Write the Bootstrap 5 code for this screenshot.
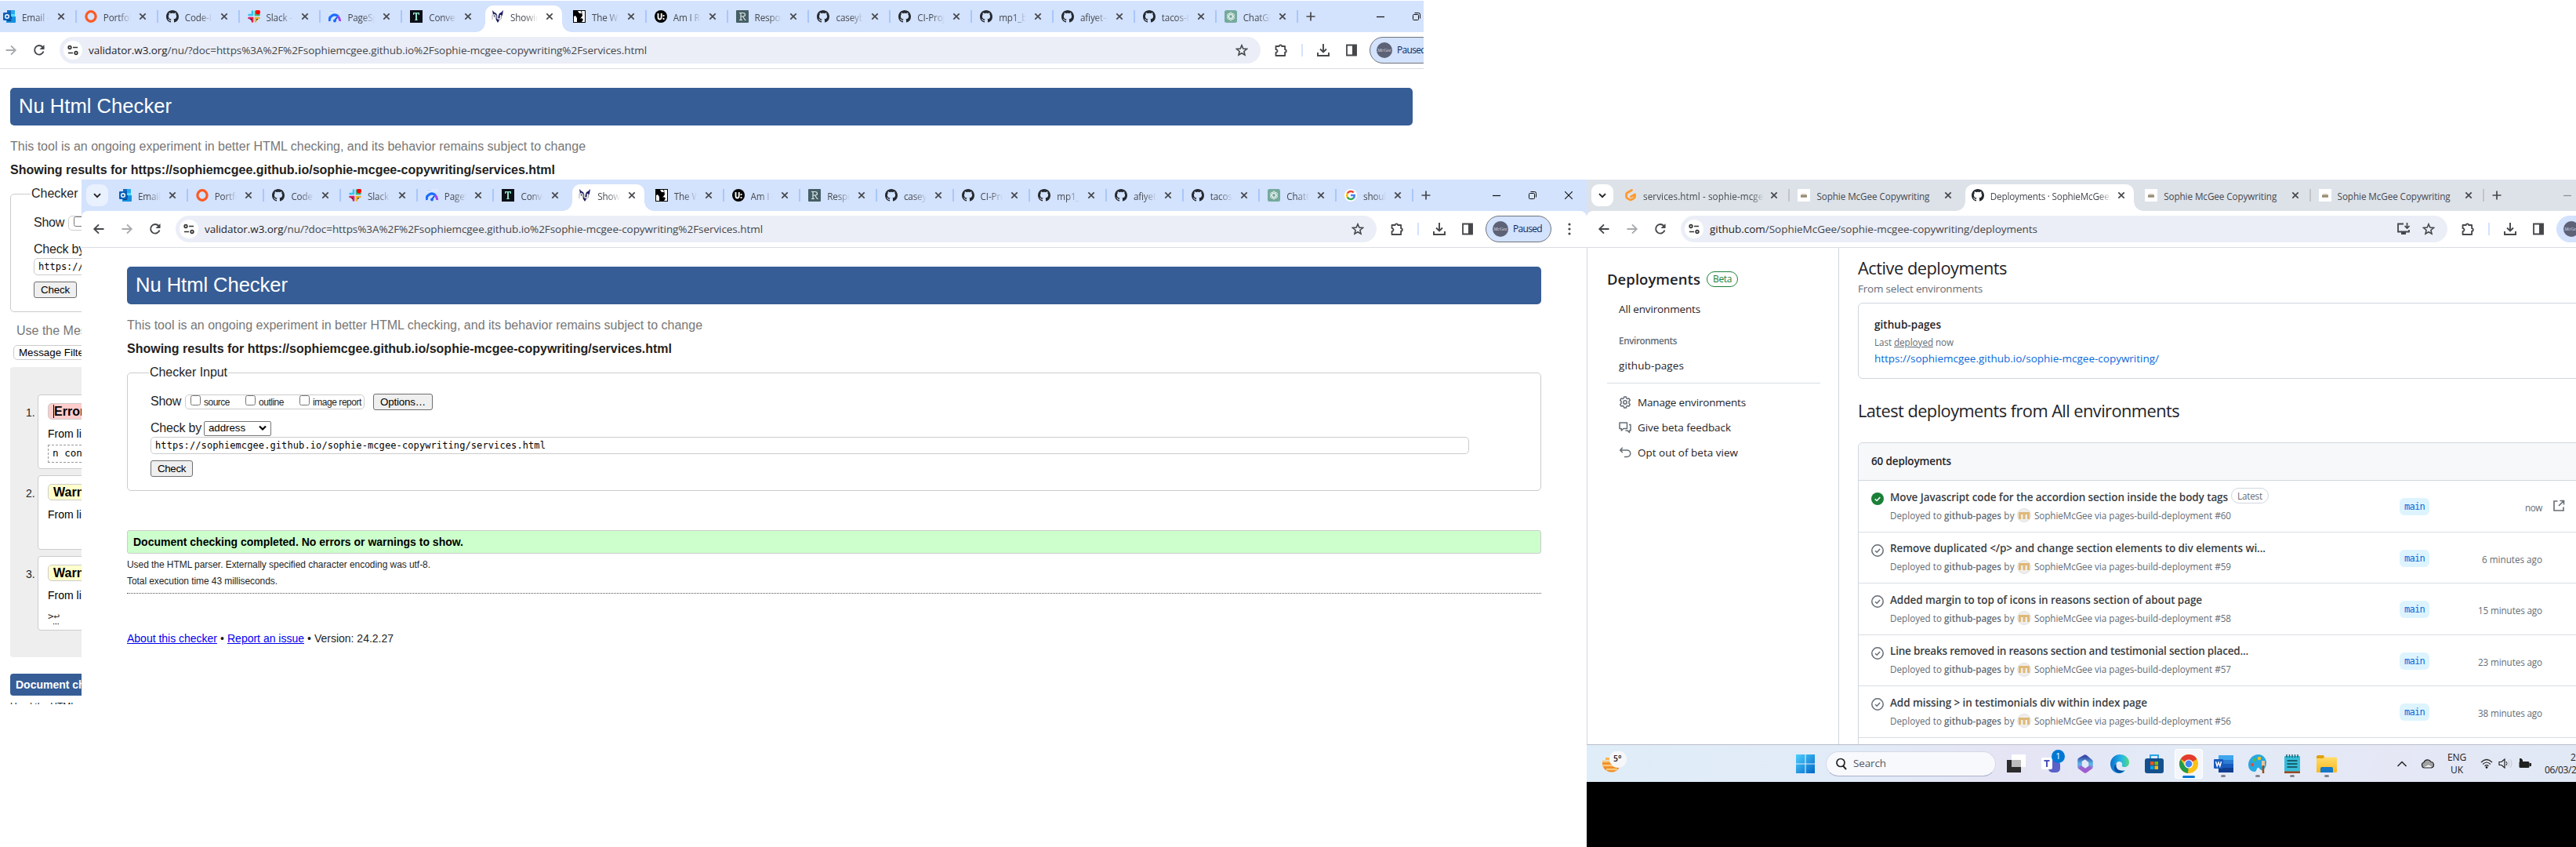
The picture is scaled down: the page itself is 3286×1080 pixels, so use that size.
<!DOCTYPE html>
<html lang="en">
<head>
<meta charset="utf-8">
<title>Nu Html Checker and GitHub Deployments</title>
<link rel="stylesheet" href="https://cdn.jsdelivr.net/npm/bootstrap@5.3.0/dist/css/bootstrap.min.css">
<style>
html,body{margin:0;background:#fff}
body{width:3286px;height:1080px;overflow:hidden;position:relative;font-family:"Open Sans","Noto Sans",sans-serif;font-size:13.5px;line-height:1.2;color:#1f2328}
svg{display:block;flex:none}
.ico{width:16px;height:16px}
.desk-window{position:absolute;overflow:hidden;background:#fff}
.win-a{left:0;top:0;width:1816px;height:898px}
.win-a .browser{margin-left:-44px;margin-top:1px;width:1920px}
.win-b{left:104px;top:229px;width:1920px;height:851px}
.win-c{left:2024px;top:229px;width:1262px;height:851px}
.win-c .browser{width:1366px}
/* browser chrome */
.strip{height:40px;background:#d3e2fd}
.win-c .strip{background:#dde2e9}
.drop{width:28px;height:28px;border-radius:9px;background:#e9f0fe;margin:0 6px}
.win-c .drop{background:#fff}
.win-a .btab{width:103.85px}.win-b .btab{width:97.7px}.win-c .btab{width:221.4px}
.btab{height:40px;flex:none;position:relative;padding:0 17px 0 8px;z-index:0}
.tabname{flex:1 1 0;overflow:hidden;white-space:nowrap;margin:1px 10px 0 8px;font-size:11.7px;line-height:18px;color:#45494f;-webkit-mask-image:linear-gradient(90deg,#000 calc(100% - 16px),transparent)}
.win-c .tabname{margin-right:8px;margin-left:8px}
.win-c .tabname.whole{-webkit-mask-image:none}
.btab.line::after{content:"";position:absolute;right:2px;top:12px;width:2px;height:16px;background:#a8c7fa}
.win-c .btab.line::after{background:#c3c4c6}
.btab.on::before{content:"";position:absolute;z-index:-1;left:0;right:6px;top:6px;bottom:0;background:#fff;border-radius:10px 10px 0 0}
.flare{position:absolute;z-index:-1;bottom:0;width:12px;height:12px}
.flare.l{left:-12px;background:radial-gradient(circle at 0 0,transparent 11.5px,#fff 12px)}
.flare.r{right:-6px;background:radial-gradient(circle at 100% 0,transparent 11.5px,#fff 12px)}
.plusbox{width:28px}
.wc{width:46px}
.toolwrap{background:#d3e2fd}
.win-c .toolwrap{background:#dde2e9}
.toolbar{height:47px;border-bottom:1px solid #dadce0;padding:0 4px;background:#fff;border-radius:8px 8px 0 0}
.tb{width:36px;flex:none}
.urlbar{height:34px;border-radius:17px;background:#ebeef7;margin:0 8px;padding:0 14px 0 5px;flex:1 1 0;font-size:13.5px;color:#45474a;white-space:nowrap}
.urlbar b{font-weight:400;color:#1f1f1f}
.site{width:24px;height:24px;border-radius:50%;background:#fff;margin-right:8px}
.tbsep{width:2px;height:16px;background:#d3e2fd;margin:0 8px}
.profile{width:84px;height:34px;border-radius:17px;border:1px solid #6f747c;background:#d3e2fd;margin:0 5px;padding-left:8px;font-size:12px;color:#0a2a62;flex:none}
.win-c .profile{border-color:#d3e2fd}
.avatar{width:20px;height:20px;border-radius:50%;background:#5d6277;color:#d9dbe2;font:italic 6px "Liberation Serif",serif;margin-right:6px}
/* validator page */
.nu{font-family:"Liberation Sans",Arial,sans-serif;font-size:16px;color:#1f1f1f;padding:24px 58px 0}
.win-a .nu{padding:24px 74px 0 57px}
.nu div,.nu span{white-space:nowrap}
.banner{height:48px;border-radius:5px;background:#365d95;color:#fff;font-size:25.6px;line-height:46px;padding-left:11px}
.intro{margin-top:17px;color:#777}
.h20{height:20px;line-height:20px}
.fset{border:1px solid #ccc;border-radius:5px;height:151px;padding:0 29px;margin-top:20px}
.leg{margin:-11px 0 0 -4px}
.leg span{background:#fff;padding:0 1px}
.win-b .leg{margin-left:-2px}
.boxes{border:1px solid #ccc;border-radius:5px;height:19px;margin-left:5px;font-size:12px;width:229px;padding-left:6px}
.chk{width:13px;height:13px;border:1px solid #767676;border-radius:2.5px;background:#fff;flex:none;margin-right:4px;margin-top:-3px}
.boxes span{position:relative;top:1px}
.btnn{border:1px solid #6f6f6f;border-radius:3px;background:#efefef;color:#000;font-size:13.33px;height:21px;line-height:19px}
.sel{border:1px solid #767676;border-radius:2px;height:19px;width:86px;font-size:13.33px;padding:0 5px;margin-left:3px;color:#000}
.addr{border:1px solid #ccc;border-radius:5px;height:22px;width:1682px;margin-top:1px;padding-left:5px;font:12px/21px "DejaVu Sans Mono",monospace;color:#000}
.okbar{margin-top:50px;height:30px;border:1px solid #ccc;border-radius:3px;background:#cfc;font-weight:700;font-size:14px;line-height:28px;padding-left:7px;color:#000}
.small12{font-size:12px;height:18px;line-height:18px}
.nu a{color:#00e;text-decoration:underline}
.dots{border-top:1px dotted #555;margin-top:6px}
.greylist{background:#eee;border-radius:4px;height:370px;margin-top:9px;padding:35px 35px 0 20px}
.msg{height:95px;margin-bottom:8px}
.msg .num{width:15px;font-size:14px;padding-top:15px;line-height:16px}
.msgbox{border:1px solid #ccc;border-radius:4px;background:#fff;padding:10px 12px;font-size:14px;color:#000}
.lvl{height:21px;border:1px solid #ccc;border-radius:5px;font-weight:700;font-size:16px;line-height:19px;padding:0 6px;width:90px}
.lvl.err{background:#fcc}.lvl.warn{background:#ffc}
.lvl.err span{border-left:1px solid #000}
.mono{font-family:"DejaVu Sans Mono",monospace;font-size:12.6px}
#ra,#rb{margin-top:10px}
.showrow{height:22px;margin-top:16px}
.byrow{height:20px;margin-top:13px}
.gapl{margin-left:20px}
.opt{margin-left:11px;padding:0 8px;width:76px}
#usem{margin-top:14px;color:#777}
#mf .boxes{font-size:13.33px;line-height:17px;width:130px;height:19px}
.from{margin-top:10px;line-height:16px}
.codeb{border:1px dashed #999;margin-top:6px;height:23px;line-height:20px;padding-left:5px}
.nl{margin-top:10px;line-height:17px;color:#333}
.nl u{text-decoration-style:dotted;text-underline-offset:5px}
.bluebar{margin-top:21px;height:28px;border-radius:4px;background:#365d95;color:#fff;font-size:14px;line-height:28px;padding-left:7px}
#u0{margin-top:5px;color:#222}
#u1{margin-top:5px}#u2{margin-top:3px}
#foot{margin-top:47px;font-size:14px}
/* GitHub page */
.gh{height:633px}
.side{width:322px;border-right:1px solid #d0d7de;border-left:1px solid #d0d7de;padding:28px 23px 0 25px;flex:none;white-space:nowrap}
.beta{border:1px solid #1a7f37;border-radius:10px;height:20px;width:40px;color:#1a7f37;font-size:12px;font-weight:500;margin-left:8px}
.side .it{height:32px;padding-left:15px}
.gray{color:#656d76}
.semi{font-weight:600}
.main{flex:1 1 0;padding:12px 0 0 24px;white-space:nowrap;overflow:hidden}
.bigt{font-size:21.8px;line-height:28px;height:28px}
.envbox{border:1px solid #d0d7de;border-radius:6px;height:97px;margin-top:8px;padding:17px 20px}
.dlist{border:1px solid #d0d7de;border-radius:6px 6px 0 0;height:400px;margin-top:26px}
.dhead{height:48px;background:#f6f8fa;border-bottom:1px solid #d0d7de;padding-left:16px;border-radius:6px 0 0 0}
.drow{height:65.5px;border-bottom:1px solid #d8dee4;padding-left:16px}
.dinfo{width:658px;padding-left:8px}
.l1{height:20px;margin-top:11px;font-weight:600;color:#3a3e43}
.l2{height:18px;margin-top:4px;font-size:11.7px;color:#656d76}
.latest{border:1px solid #d0d7de;border-radius:10px;height:20px;width:48px;margin:-4px 0 0 4px;font-size:11.7px;font-weight:500;color:#656d76}
.face{width:18px;height:18px;border-radius:50%;background:#f0eeeb;border:1px solid #e2e2e4}
.branch{width:38px;height:22px;border-radius:6px;background:#ddf4ff;color:#0969da;font:12px "DejaVu Sans Mono",monospace;margin-top:22px}
.ago{width:144px;text-align:right;margin-top:25px;font-size:11.7px;line-height:18px;color:#656d76}
#dt{font-size:18.5px}
#alle{margin-top:10px}
#envh{margin-top:8px;font-size:11.7px}
.hrline{border-top:1px solid #d8dee4;margin:6px 0 8px}
.envsub{font-size:11.7px;height:20px;line-height:20px;margin-top:2px}
.envbox .h20:last-child{margin-top:1px}
#ld{margin-top:27px}
/* taskbar */
.taskbar{height:48px;border-top:1px solid #b9bcc9;background:linear-gradient(90deg,#dfedf8 0,#e2ebf8 25%,#e5e4f4 40%,#e3ebf7 55%,#e5e7f5 75%,#dfeaf6 100%);width:1366px}
.ti{width:44px;height:47px;flex:none;position:relative}
.ti.run::after{content:"";position:absolute;left:19px;bottom:6px;width:6px;height:3px;border-radius:2px;background:#85868e}
.ti.cur{background:#f5f6fc;box-shadow:inset 0 0 0 1px #fff;border-radius:4px;width:36px;height:38px;margin:0 4px}
.ti.cur::after{left:10px;bottom:1px;width:16px;background:#0078d4}
.tsearch{width:217px;height:32px;border-radius:16px;background:#f8f9fd;border:1px solid #d6d9e8;border-bottom-color:#a9b3cc;padding-left:10px;margin:0 4px;color:#55575c}
.weather{width:257px;padding-left:20px}
.note1{position:absolute;left:23px;top:6px;width:17px;height:17px;border-radius:50%;background:#0078d4;color:#fff;font-size:11px;line-height:16px;text-align:center}
.tray{font-size:12px;line-height:16px;color:#222;text-align:center}
#tray{margin-left:67px}
#cl{margin-left:17px}#lang{width:28px;margin-left:14px}#wf{margin-left:16px}#vo{margin-left:7px}#ba{margin-left:7px}#clk{width:60px;margin-left:17px}
.blackfill{background:#000;height:84px}
span[data-w],a[data-w],u[data-w]{display:inline-block;white-space:pre!important}
</style>
</head>
<body>
<svg width="0" height="0" class="position-absolute">
<defs>
<symbol id="outlook" viewBox="0 0 16 16"><path fill="#28a8ea" d="M5 0h10v9H5z"/><path fill="#0f6cbd" d="M5 0h5v5H5z"/><path fill="#50d9ff" d="M10 5h5v4h-5z"/><path fill="#1490df" d="M4 9l12-1v7a1 1 0 0 1-1 1H4z"/><path fill="#0a3f7a" d="M5 8h6l-1 6H5z"/><rect y="3" width="10" height="10" rx="1" fill="#0a5fb8"/><circle cx="5" cy="8" r="2.3" fill="none" stroke="#fff" stroke-width="1.4"/></symbol>
<symbol id="ring" viewBox="0 0 16 16"><ellipse cx="8" cy="8" rx="6.1" ry="6.3" fill="none" stroke="#fb5a22" stroke-width="3.2"/></symbol>
<symbol id="gh" viewBox="0 0 16 16"><path fill="#24292f" d="M8 0c4.42 0 8 3.58 8 8a8.013 8.013 0 0 1-5.45 7.59c-.4.08-.55-.17-.55-.38 0-.27.01-1.13.01-2.2 0-.75-.25-1.23-.54-1.48 1.78-.2 3.65-.88 3.65-3.95 0-.88-.31-1.59-.82-2.15.08-.2.36-1.02-.08-2.12 0 0-.67-.22-2.2.82-.64-.18-1.32-.27-2-.27-.68 0-1.36.09-2 .27-1.53-1.03-2.2-.82-2.2-.82-.44 1.1-.16 1.92-.08 2.12-.51.56-.82 1.28-.82 2.15 0 3.06 1.86 3.75 3.64 3.95-.23.2-.44.55-.51 1.07-.46.21-1.61.55-2.33-.66-.15-.24-.6-.83-1.23-.82-.67.01-.27.38.01.53.34.19.73.9.82 1.13.16.45.68 1.31 2.69.94 0 .67.01 1.3.01 1.49 0 .21-.15.45-.55.38A7.995 7.995 0 0 1 0 8c0-4.42 3.58-8 8-8Z"/></symbol>
<symbol id="slack" viewBox="0 0 16 16"><g stroke-width="2.600" stroke-linecap="round"><path stroke="#36c5f0" d="M6 1.500V6M1.500 6H6"/><path stroke="#2eb67d" d="M10 1.500V6h4.500"/><path stroke="#ecb22e" d="M10 14.500V10h4.500"/><path stroke="#e01e5a" d="M1.500 10H6v4.500"/></g><circle cx="13" cy="2.500" r="3" fill="#f00"/></symbol>
<symbol id="gauge" viewBox="0 0 16 16"><path fill="#dbe8fd" d="M0 0h16v4H0z"/><path fill="#b6d2fc" d="M1 1h6v1H1z"/><path d="M1.500 14a6.500 6.500 0 0 1 11-6" fill="none" stroke="#1a6dff" stroke-width="3"/><path d="M12 8a7 7 0 0 1 2.500 6" fill="none" stroke="#a142f4" stroke-width="3"/><path d="M8 13l3-4" stroke="#0b57d0" stroke-width="2"/><circle cx="8" cy="13.500" r="2" fill="#1a6dff"/></symbol>
<symbol id="tee" viewBox="0 0 16 16"><path fill="#0b0f17" d="M0 0h16v16H0z"/><path fill="#8ee0c8" d="M4 3h8v3h-1.200L10.500 4.300H9v7.700l1 .4v.6H6v-.6l1-.4V4.300H5.500L5.200 6H4z"/></symbol>
<symbol id="nu" viewBox="0 0 16 16"><path fill="#1d1a63" d="M1 0l3 3 2 1 2 5 2-5 2-1 3-3-1 6-3 5-3 5-3-5-3-5z"/><path d="M1.500 12V7q2-3 3.500 0v5M7.500 7v3q2 3 4 0V6v6" fill="none" stroke="#fff" stroke-width="1.700"/><path d="M1 12V6q2.500-2 4.500 1v5M7 6v5q3 2 5.500 0V6" fill="none" stroke="#888" stroke-width=".7"/></symbol>
<symbol id="wshape" viewBox="0 0 16 16"><path d="M0 0h16v16H0z"/><path fill="#fff" d="M1 8l2-1 2 3v5H1zM6 1h4l1 3H8zM11 1h4v14h-4l2-3-2-2-2 1 3-4z"/></symbol>
<symbol id="ux" viewBox="0 0 16 16"><circle cx="8" cy="8" r="8"/><path d="M4.500 4v5q0 2.500 2 2.500T8.700 9V4M11.500 6v2M11.500 10v2" fill="none" stroke="#fff" stroke-width="1.900"/></symbol>
<symbol id="arr" viewBox="0 0 16 16"><rect width="16" height="16" rx="1" fill="#455f66"/><path d="M4 3.500h4.500q3 .2 3 2.300T8.500 8H6M6 3.500v9M4 12.500h4M8.500 8l3 4.500h1" fill="none" stroke="#dfe6e6" stroke-width="1.200"/></symbol>
<symbol id="gpt" viewBox="0 0 16 16"><rect width="16" height="16" rx="2.500" fill="#74aa9c"/><g fill="none" stroke="#fff" stroke-width=".8"><ellipse cx="8" cy="8" rx="2.300" ry="5"/><ellipse cx="8" cy="8" rx="2.300" ry="5" transform="rotate(60 8 8)"/><ellipse cx="8" cy="8" rx="2.300" ry="5" transform="rotate(120 8 8)"/></g></symbol>
<symbol id="goog" viewBox="0 0 16 16"><circle cx="8" cy="8" r="8" fill="#fff"/><g fill="none" stroke-width="2.500"><path stroke="#ea4335" d="M3.800 5.500a5 5 0 0 1 8-1"/><path stroke="#fbbc05" d="M3.800 5.500a5 5 0 0 0 0 5"/><path stroke="#34a853" d="M3.800 10.500a5 5 0 0 0 7.500 1.300"/><path stroke="#4285f4" d="M8 8h4.800a5 5 0 0 1-1.500 3.800"/></g></symbol>
<symbol id="gitpod" viewBox="0 0 16 16"><path d="M9.500 1.500L3.500 5q-1 .6-1 1.800v3q0 1.200 1 1.800l3.500 2q1 .6 2 0l3.500-2q1-.6 1-1.800V7L8.500 9.800" fill="none" stroke="#ff9a2e" stroke-width="2.800" stroke-linecap="round" stroke-linejoin="round"/></symbol>
<symbol id="smg" viewBox="0 0 16 16"><path fill="#fff" d="M0 0h16v16H0z"/><path fill="#e9c9bd" d="M5 6h6v1.500H5z"/><path fill="#8c9079" d="M4 7.500h8V10H4z"/><path fill="#c7a58f" d="M4 10h8v1H4z"/></symbol>
<symbol id="x" viewBox="0 0 10 10"><path d="M1.300 1.300l7.400 7.400M8.700 1.300L1.300 8.700" stroke="#45474a" stroke-width="1.700"/></symbol>
<symbol id="back" viewBox="0 0 16 16"><path d="M14.500 8H2.500M8 2.300L2.300 8 8 13.700" fill="none" stroke="currentColor" stroke-width="1.900"/></symbol>
<symbol id="reload" viewBox="0 0 16 16"><path d="M13.500 9.500A5.800 5.800 0 1 1 12.300 4L14 5.500" fill="none" stroke="#45474a" stroke-width="1.900"/><path fill="#45474a" d="M14.500 1v6h-6z"/></symbol>
<symbol id="tune" viewBox="0 0 16 16"><g fill="none" stroke="#333" stroke-width="1.700"><circle cx="4" cy="4.500" r="1.800"/><path d="M8 4.500h6M2 11.500h6"/><circle cx="12" cy="11.500" r="1.800"/></g></symbol>
<symbol id="star" viewBox="0 0 16 16"><path d="M8 1.800l1.800 4.300 4.600.4-3.500 3 1.100 4.600L8 11.700l-4 2.400 1.100-4.600-3.500-3 4.600-.4z" fill="none" stroke="#45474a" stroke-width="1.600"/></symbol>
<symbol id="puzzle" viewBox="0 0 16 16"><path d="M1.500 3h4.200a1.700 1.700 0 0 1 3.400 0h4v4.200a1.700 1.700 0 0 1 0 3.400V15H1.500v-4a2 2 0 0 0 0-4z" fill="none" stroke="#45474a" stroke-width="1.800" stroke-linejoin="round"/></symbol>
<symbol id="down" viewBox="0 0 16 16"><path d="M8 0v10M4 6.500L8 10.500 12 6.500M1 11v4h14v-4" fill="none" stroke="#45474a" stroke-width="1.900"/></symbol>
<symbol id="panel" viewBox="0 0 16 16"><path d="M2 1.500h12v13H2z" fill="none" stroke="#45474a" stroke-width="1.800"/><path fill="#45474a" d="M9 1h5.500v14H9z"/></symbol>
<symbol id="inst" viewBox="0 0 16 16"><path d="M8 1.500H1v10h14V9" fill="none" stroke="#45474a" stroke-width="1.800"/><path fill="#45474a" d="M5 12h6v3H5z"/><path d="M12.500 0v6M9.500 4l3 3 3-3" fill="none" stroke="#45474a" stroke-width="1.700"/></symbol>
<symbol id="check" viewBox="0 0 16 16"><circle cx="8" cy="8" r="7.200" fill="none" stroke="#656d76" stroke-width="1.500"/><path d="M5 8.300l2.200 2 3.900-4.300" fill="none" stroke="#656d76" stroke-width="1.500"/></symbol>
<symbol id="checkok" viewBox="0 0 16 16"><circle cx="8" cy="8" r="8" fill="#1a7f37"/><path d="M4.700 8.300l2.400 2.200 4.200-4.600" fill="none" stroke="#fff" stroke-width="1.500"/></symbol>
<symbol id="gear" viewBox="0 0 16 16"><path d="M6.700 1h2.600l.5 1.900 1.300.7 1.900-.5 1.300 2.200-1.300 1.500v2.400l1.300 1.500-1.300 2.200-1.900-.5-1.300.7-.5 1.900H6.700l-.5-1.900-1.300-.7-1.900.5-1.300-2.200L3 9.200V6.800L1.700 5.300 3 3.100l1.900.5 1.300-.7z" fill="none" stroke="#656d76" stroke-width="1.500" stroke-linejoin="round"/><circle cx="8" cy="8" r="2.200" fill="none" stroke="#656d76" stroke-width="1.500"/></symbol>
<symbol id="talk" viewBox="0 0 16 16"><path d="M1 2h9.500v7.500H6L3.300 12V9.500H1zM13 4.500h2v7.500h-1.500v2.500L11 12H8.500" fill="none" stroke="#656d76" stroke-width="1.500" stroke-linejoin="round"/></symbol>
<symbol id="undo" viewBox="0 0 16 16"><path d="M4.800 1.800L1.800 5l3 3.200M2 5h8.500a4 4 0 0 1 0 8.500H7" fill="none" stroke="#656d76" stroke-width="1.500"/></symbol>
<symbol id="ext" viewBox="0 0 16 16"><path d="M6.500 2H2v12h12V9.500M9.500 1.500h5v5M14 2L8 8" fill="none" stroke="#656d76" stroke-width="1.600"/></symbol>
<linearGradient id="blu" x2="1" y2="1"><stop stop-color="#4fd0ff"/><stop offset="1" stop-color="#0067c8"/></linearGradient>
<linearGradient id="cop" x2="0" y2="1"><stop stop-color="#3b4aa8"/><stop offset=".5" stop-color="#58b7ea"/><stop offset="1" stop-color="#b455c8"/></linearGradient>
<linearGradient id="edg" x2="1" y2="0"><stop stop-color="#0c6fd0"/><stop offset=".6" stop-color="#25b9e6"/><stop offset="1" stop-color="#57d878"/></linearGradient>
<linearGradient id="fol" x2="0" y2="1"><stop stop-color="#ffdc6b"/><stop offset="1" stop-color="#fbb81a"/></linearGradient>
</defs></svg>

<!-- rear validator window -->
<section class="desk-window win-a">
 <div class="browser">
  <div data-chrome="a"></div>
  <div class="nu">
   <div class="banner"><span data-w="195">Nu Html Checker</span></div>
   <div class="h20 intro"><span data-w="734">This tool is an ongoing experiment in better HTML checking, and its behavior remains subject to change</span></div>
   <div class="h20 fw-bold" id="ra"><span data-w="695">Showing results for https://sophiemcgee.github.io/sophie-mcgee-copywriting/services.html</span></div>
   <div class="fset">
    <div class="h20 leg"><span>Checker Input</span></div>
    <div class="d-flex align-items-center showrow"><span data-w="39">Show</span><div class="boxes d-flex align-items-center"><i class="chk"></i></div></div>
    <div class="d-flex align-items-center byrow"><span data-w="65">Check by</span></div>
    <div class="addr">https://so</div>
    <div class="btnn d-inline-block mt-2 px-2"><span data-w="37">Check</span></div>
   </div>
   <div class="h20 ps-2" id="usem">Use the Message</div>
   <div class="d-flex align-items-center ps-1 mt-2" id="mf"><div class="boxes ms-0 text-black">Message Filtering</div></div>
   <div class="greylist">
    <div class="msg d-flex"><div class="num">1.</div><div class="msgbox flex-fill"><div class="lvl err"><span>Error</span></div><div class="from">From line</div><div class="codeb mono">n content</div></div></div>
    <div class="msg d-flex"><div class="num">2.</div><div class="msgbox flex-fill"><div class="lvl warn">Warning</div><div class="from">From line</div></div></div>
    <div class="msg d-flex"><div class="num">3.</div><div class="msgbox flex-fill"><div class="lvl warn">Warning</div><div class="from">From line</div><div class="nl mono">&gt;<u>↩</u></div></div></div>
   </div>
   <div class="bluebar fw-bold">Document checking</div>
   <div class="small12" id="u0">Used the HTML parser.</div>
  </div>
 </div>
</section>

<!-- front validator window -->
<section class="desk-window win-b">
 <div class="browser">
  <div data-chrome="b"></div>
  <div class="nu">
   <div class="banner"><span data-w="194">Nu Html Checker</span></div>
   <div class="h20 intro"><span data-w="734">This tool is an ongoing experiment in better HTML checking, and its behavior remains subject to change</span></div>
   <div class="h20 fw-bold" id="rb"><span data-w="695">Showing results for https://sophiemcgee.github.io/sophie-mcgee-copywriting/services.html</span></div>
   <div class="fset">
    <div class="h20 leg"><span data-w="101">Checker Input</span></div>
    <div class="d-flex align-items-center showrow"><span data-w="39">Show</span>
     <div class="boxes d-flex align-items-center"><i class="chk"></i><span data-w="33">source</span><i class="chk gapl"></i><span data-w="32">outline</span><i class="chk gapl"></i><span data-w="62">image report</span></div>
     <div class="btnn opt"><span data-w="58">Options…</span></div></div>
    <div class="d-flex align-items-center byrow"><span data-w="65">Check by</span><div class="sel d-flex align-items-center justify-content-between"><span data-w="47">address</span><svg width="10" height="8" viewBox="0 0 10 8"><path d="M1 1.500l4 4 4-4" fill="none" stroke="#000" stroke-width="2.200"/></svg></div></div>
    <div class="addr"><span data-w="498">https://sophiemcgee.github.io/sophie-mcgee-copywriting/services.html</span></div>
    <div class="btnn d-inline-block mt-2 px-2"><span data-w="36">Check</span></div>
   </div>
   <div class="okbar"><span data-w="421">Document checking completed. No errors or warnings to show.</span></div>
   <div class="small12" id="u1"><span data-w="387">Used the HTML parser. Externally specified character encoding was utf-8.</span></div>
   <div class="small12" id="u2"><span data-w="192">Total execution time 43 milliseconds.</span></div>
   <div class="dots"></div>
   <div class="h20" id="foot"><a href="#" data-w="115">About this checker</a><span data-w="13"> • </span><a href="#" data-w="98">Report an issue</a><span data-w="13"> • </span><span data-w="101">Version: 24.2.27</span></div>
  </div>
 </div>
</section>

<!-- GitHub window with taskbar -->
<section class="desk-window win-c">
 <div class="browser">
  <div data-chrome="c"></div>
  <div class="gh d-flex">
   <aside class="side">
    <div class="d-flex align-items-center mb-2" style="height:24px"><span class="semi" id="dt" data-w="119">Deployments</span><span class="beta d-flex align-items-center justify-content-center"><span data-w="24">Beta</span></span></div>
    <div class="it d-flex align-items-center" id="alle"><span data-w="104">All environments</span></div>
    <div class="it d-flex align-items-center gray semi" id="envh"><span data-w="74">Environments</span></div>
    <div class="it d-flex align-items-center"><span data-w="83">github-pages</span></div>
    <div class="hrline"></div>
    <div class="it d-flex align-items-center gap-2"><svg class="ico"><use href="#gear"/></svg><span data-w="138">Manage environments</span></div>
    <div class="it d-flex align-items-center gap-2"><svg class="ico"><use href="#talk"/></svg><span data-w="119">Give beta feedback</span></div>
    <div class="it d-flex align-items-center gap-2"><svg class="ico"><use href="#undo"/></svg><span data-w="128">Opt out of beta view</span></div>
   </aside>
   <main class="main">
    <div class="bigt"><span data-w="190">Active deployments</span></div>
    <div class="gray h20" style="margin-top:2px"><span data-w="159">From select environments</span></div>
    <div class="envbox">
     <div class="h20 semi"><span data-w="85">github-pages</span></div>
     <div class="gray envsub"><span data-w="25">Last </span><u data-w="50">deployed</u><span data-w="26"> now</span></div>
     <div class="h20" style="color:#0969da"><span data-w="363">https://sophiemcgee.github.io/sophie-mcgee-copywriting/</span></div>
    </div>
    <div class="bigt" id="ld"><span data-w="410">Latest deployments from All environments</span></div>
    <div class="dlist"><div class="dhead d-flex align-items-center semi"><span data-w="102">60 deployments</span></div><div id="rows"></div></div>
   </main>
  </div>
  <footer class="taskbar d-flex align-items-center">
   <div class="weather"><svg width="32" height="32" viewBox="0 0 32 32"><path fill="#f08a24" d="M0 14h23a11.500 11.500 0 0 1-23 2z"/><path fill="#f9b64c" d="M4 8h8v3H4z"/><path stroke="#f8c877" stroke-width="2.500" d="M0 13h18M0 18h22M5 23h14"/><circle cx="20" cy="10" r="11" fill="#f7f7f9"/><text x="14" y="13" font-size="10.500" font-weight="600" fill="#222">5°</text></svg></div>
   <div class="ti d-flex align-items-center justify-content-center"><svg width="24" height="24" viewBox="0 0 24 24"><path fill="url(#blu)" d="M0 0h11.400v11.400H0zM12.600 0H24v11.400H12.600zM0 12.600h11.400V24H0zM12.600 12.600H24V24H12.600z"/></svg></div>
   <div class="tsearch d-flex align-items-center gap-2"><svg width="16" height="16" viewBox="0 0 16 16"><circle cx="8" cy="6.500" r="5" fill="none" stroke="#222" stroke-width="1.700"/><path d="M11 10.500l4 4.500" stroke="#222" stroke-width="1.900"/></svg><span data-w="42">Search</span></div>
   <div class="ti d-flex align-items-center justify-content-center"><svg width="24" height="24" viewBox="0 0 24 24"><path fill="#2c2c2c" d="M0 7h18v16H0z"/><path fill="#fff" d="M6 0h18v16H6z"/><path fill="#bdbdbd" d="M6 7h12v9H6z"/></svg></div>
   <div class="ti d-flex align-items-center justify-content-center"><svg width="24" height="24" viewBox="0 0 24 24"><circle cx="17" cy="7" r="4" fill="#7b83eb"/><rect x="9" y="8" width="15" height="15" rx="5" fill="#5b62c8"/><rect y="4" width="14" height="15" rx="2" fill="#fff"/><path stroke="#4a52b8" stroke-width="2" d="M3.500 8h7M7 8v8"/></svg><span class="note1">1</span></div>
   <div class="ti d-flex align-items-center justify-content-center"><svg width="22" height="24" viewBox="0 0 22 24"><path d="M11 3L4 7v9l7 5 7-5V9z" fill="none" stroke="url(#cop)" stroke-width="5.500" stroke-linejoin="round"/><path d="M4 16l7 5 7-5" fill="none" stroke="#9a5fd0" stroke-width="4" stroke-linejoin="round"/></svg></div>
   <div class="ti d-flex align-items-center justify-content-center"><svg width="24" height="24" viewBox="0 0 24 24"><path fill="url(#edg)" d="M12 0c7 0 12 5 12 10 0 4-3 6-6 6-3 0-4-1-3-2.500 1-2-1-4.500-4-4.500-2.500 0-4.500 3-4 6 .8 4.500 6 7 12 5-2 3-5 4-8 4C4 24 0 18 0 12S5 0 12 0z"/><path fill="#0a4fa5" d="M8 12c-2 5 2 10 10 8.500-3 3-6 3.500-8 3-6-2-7-9-2-11.500z"/></svg></div>
   <div class="ti d-flex align-items-center justify-content-center"><svg width="24" height="26" viewBox="0 0 24 26"><path d="M7 8V2h10v6" fill="none" stroke="#2ba3e6" stroke-width="2"/><rect y="6" width="24" height="19" rx="3" fill="#12508e"/><path fill="#f25022" d="M7 10h4.500v4.500H7z"/><path fill="#7fba00" d="M12.500 10H17v4.500h-4.500z"/><path fill="#00a4ef" d="M7 15.500h4.500V20H7z"/><path fill="#ffb900" d="M12.500 15.500H17V20h-4.500z"/></svg></div>
   <div class="ti run cur d-flex align-items-center justify-content-center"><svg width="24" height="24" viewBox="0 0 24 24"><circle cx="12" cy="12" r="12" fill="#fbc116"/><path fill="#e33b2e" d="M12 12L1.600 6A12 12 0 0 1 22.400 6z"/><path fill="#229a4c" d="M12 12l-1 12A12 12 0 0 1 1.600 6l5.500 8.500z"/><circle cx="12" cy="12" r="5.600" fill="#fff"/><circle cx="12" cy="12" r="4.400" fill="#4285f4"/></svg></div>
   <div class="ti run d-flex align-items-center justify-content-center"><svg width="25" height="22" viewBox="0 0 25 22"><path fill="#3fa5ee" d="M6 0h19v6H6z"/><path fill="#2b7cd3" d="M6 6h19v5H6z"/><path fill="#185abd" d="M6 11h19v5H6z"/><path fill="#103f91" d="M6 16h19v6H6z"/><rect y="5" width="12" height="12" rx="1" fill="#185abd"/><path d="M2.500 8l1.700 6L6 9l1.800 5 1.700-6" fill="none" stroke="#fff" stroke-width="1.400"/></svg></div>
   <div class="ti run d-flex align-items-center justify-content-center"><svg width="24" height="24" viewBox="0 0 24 24"><path fill="#26a9e0" d="M13 0C5 0 0 7 0 13s4 9 8 9c3 0 2-4 4-5s3 4 6 3c4-2 5-6 5-10S19 0 13 0z"/><circle cx="5" cy="13" r="2" fill="#e74a3c"/><circle cx="8" cy="7" r="2.200" fill="#54b948"/><circle cx="14" cy="5" r="2.200" fill="#fbc116"/><path d="M19 8v7" stroke="#e8c39a" stroke-width="4"/><path d="M19 14v10" stroke="#9a4e16" stroke-width="2.500"/></svg></div>
   <div class="ti run d-flex align-items-center justify-content-center"><svg width="20" height="24" viewBox="0 0 20 24"><rect y="2" width="20" height="20" rx="1" fill="#36bcd9"/><path d="M3 0v4M6.500 0v4M10 0v4M13.500 0v4M17 0v4" stroke="#1b6476" stroke-width="1.500"/><path d="M3.500 8h13M3.500 12h13M3.500 16h13" stroke="#16606f" stroke-width="1.800"/><path fill="#984820" d="M0 21.500h20V24H0z"/></svg></div>
   <div class="ti run d-flex align-items-center justify-content-center"><svg width="26" height="22" viewBox="0 0 26 22"><path fill="#e0a010" d="M1 0h8l2 4H1z"/><rect x="0" y="2.500" width="26" height="19.500" rx="1.500" fill="url(#fol)"/><path fill="#e0a010" d="M0 1h9v3H0z"/><path fill="#1478c9" d="M5 22v-5q0-2 2-2h12q2 0 2 2v5z"/></svg></div>
   <div class="tray d-flex align-items-center" id="tray">
    <svg width="14" height="8" viewBox="0 0 14 8"><path d="M1.500 7L7 1.500 12.500 7" fill="none" stroke="#222" stroke-width="1.500"/></svg>
    <svg width="18" height="12" viewBox="0 0 18 12" id="cl"><path d="M4.500 11a3.600 3.600 0 0 1-.5-7 5 5 0 0 1 9-.5 3.800 3.800 0 0 1 .5 7.500z" fill="#a2a2a4" stroke="#222" stroke-width="1.200"/><path d="M4 10.300l6-3 4 2.500-1 .5z" fill="#efefef"/></svg>
    <div id="lang"><span data-w="24">ENG</span><br><span data-w="16">UK</span></div>
    <svg width="16" height="13" viewBox="0 0 16 13" id="wf"><path d="M1 5q7-7 14 0M3.200 7.500q4.800-5 9.600 0M5.500 9.800q2.500-2.500 5 0" fill="none" stroke="#222" stroke-width="1.200"/><circle cx="8" cy="11.500" r="1.300"/></svg>
    <svg width="18" height="13" viewBox="0 0 18 13" id="vo"><path d="M1 4.500h3L8 1v11L4 8.500H1z" fill="none" stroke="#222" stroke-width="1.200"/><path d="M10 4q2 2.500 0 5" fill="none" stroke="#222"/><path d="M12.500 2.500q3 4 0 8M15 1q4 5.500 0 11" fill="none" stroke="#c4c6cf"/></svg>
    <svg width="17" height="13" viewBox="0 0 17 13" id="ba"><rect x="1.500" y="4" width="13" height="8" rx="1.500" fill="#222"/><path fill="#222" d="M14.500 6H17v4h-2.500zM2 0v5h4V2L4 0z"/></svg>
    <div class="text-end" id="clk"><span data-w="27">21:14</span><br><span data-w="60">06/03/2024</span></div>
   </div>
  </footer>
  <div class="blackfill"></div>
 </div>
</section>
<script src="https://cdn.jsdelivr.net/npm/bootstrap@5.3.0/dist/js/bootstrap.bundle.min.js"></script>
<script>
const use=(id,c='ico')=>`<svg class="${c}"><use href="#${id}"/></svg>`;
const common=[['outlook','Email - '],['ring','Portfolio'],['gh','Code-Inst'],['slack','Slack - mc'],['gauge','PageSpeed'],['tee','Convert'],['nu','Showing'],['wshape','The W3C'],['ux','Am I Res'],['arr','Responsive'],['gh','caseyb'],['gh','CI-Project'],['gh','mp1_bio'],['gh','afiyet-ol'],['gh','tacos-tr'],['gpt','ChatGPT']];
const sets={
 a:{tabs:common,on:6,url:'<b>validator.w3.org</b>/nu/?doc=https%3A%2F%2Fsophiemcgee.github.io%2Fsophie-mcgee-copywriting%2Fservices.html',w:712},
 b:{tabs:[...common,['goog','should I']],on:6,url:'<b>validator.w3.org</b>/nu/?doc=https%3A%2F%2Fsophiemcgee.github.io%2Fsophie-mcgee-copywriting%2Fservices.html',w:712},
 c:{tabs:[['gitpod','services.html - sophie-mcgee-copy',190],['smg','Sophie McGee Copywriting',144],['gh','Deployments · SophieMcGee/soph',182],['smg','Sophie McGee Copywriting',144],['smg','Sophie McGee Copywriting',144]],on:2,url:'<b>github.com</b>/SophieMcGee/sophie-mcgee-copywriting/deployments',w:418}};
document.querySelectorAll('[data-chrome]').forEach(el=>{
 const k=el.dataset.chrome,s=sets[k],grey=k=='c'?'#8b8d91':'#111';
 el.innerHTML=`<div class="strip d-flex align-items-center"><div class="drop d-flex align-items-center justify-content-center"><svg width="10" height="7" viewBox="0 0 10 7"><path d="M1 1.200l4 4 4-4" fill="none" stroke="#222" stroke-width="1.900"/></svg></div>`+
 s.tabs.map((t,i)=>`<div class="btab d-flex align-items-center ${i==s.on?'on':i==s.on-1?'':'line'}">${i==s.on?'<i class="flare l"></i><i class="flare r"></i>':''}${use(t[0])}<div class="tabname ${t[2]==144?'whole':''}"><span ${t[2]?`data-w="${t[2]}"`:'class="tn"'}>${t[1]}</span></div><svg width="10" height="10"><use href="#x"/></svg></div>`).join('')+
 `<div class="plusbox d-flex justify-content-center"><svg width="12" height="12" viewBox="0 0 12 12"><path d="M6 .5v11M.5 6h11" stroke="#45474a" stroke-width="1.700"/></svg></div>
 <div class="ms-auto d-flex align-items-center"><div class="wc d-flex justify-content-center"><svg width="10" height="10"><path d="M0 5.500h10" stroke="${grey}" stroke-width="1.200"/></svg></div><div class="wc d-flex justify-content-center"><svg width="10" height="10" viewBox="0 0 10 10"><rect x=".5" y="2.500" width="7" height="7" rx="1" fill="none" stroke="${grey}"/><path d="M2.500.5h5q2 0 2 2v5" fill="none" stroke="${grey}"/></svg></div><div class="wc d-flex justify-content-center"><svg width="10" height="10" viewBox="0 0 10 10"><path d="M0 0l10 10M10 0L0 10" stroke="${grey}" stroke-width="1.100"/></svg></div></div></div>
 <div class="toolwrap"><div class="toolbar d-flex align-items-center">
 <div class="tb d-flex justify-content-center" style="color:#45474a">${use('back')}</div><div class="tb d-flex justify-content-center" style="color:#a8aaad;transform:scaleX(-1)">${use('back')}</div><div class="tb d-flex justify-content-center">${use('reload')}</div>
 <div class="urlbar d-flex align-items-center"><span class="site d-flex align-items-center justify-content-center">${use('tune')}</span><span data-w="${s.w}">${s.url}</span><span class="ms-auto d-flex" style="gap:16px;margin-right:2px">${k=='c'?use('inst'):''}${use('star')}</span></div>
 <div class="tb d-flex justify-content-center">${use('puzzle')}</div><div class="tbsep"></div><div class="tb d-flex justify-content-center">${use('down')}</div><div class="tb d-flex justify-content-center">${use('panel')}</div>
 <div class="profile d-flex align-items-center"><span class="avatar d-flex align-items-center justify-content-center">McGee</span><span data-w="37">Paused</span></div>
 <div class="tb d-flex justify-content-center"><svg width="4" height="16"><circle cx="2" cy="2" r="1.600" fill="#45474a"/><circle cx="2" cy="8" r="1.600" fill="#45474a"/><circle cx="2" cy="14" r="1.600" fill="#45474a"/></svg></div></div></div>`;
});
const deployments=[['Move Javascript code for the accordion section inside the body tags',431,60,'now'],['Remove duplicated &lt;/p&gt; and change section elements to div elements wi...',479,59,'6 minutes ago',77],['Added margin to top of icons in reasons section of about page',398,58,'15 minutes ago',82],['Line breaks removed in reasons section and testimonial section placed...',457,57,'23 minutes ago',82],['Add missing &gt; in testimonials div within index page',328,56,'38 minutes ago',82]];
document.getElementById('rows').innerHTML=deployments.map((d,i)=>`<div class="drow d-flex">
<div style="padding-top:15px">${use(i?'check':'checkok')}</div>
<div class="dinfo"><div class="l1 d-flex align-items-center"><span data-w="${d[1]}">${d[0]}</span>${i?'':'<span class="latest d-flex align-items-center justify-content-center"><span data-w="32">Latest</span></span>'}</div>
<div class="l2 d-flex align-items-center"><span data-w="69">Deployed to </span><span class="semi" data-w="73">github-pages</span><span data-w="20"> by </span><span class="face d-flex align-items-center justify-content-center"><svg width="14" height="9" viewBox="0 0 14 9"><path fill="#dfb878" d="M0 0h14v9h-3V3H8.500v6h-3V3H3v6H0z"/></svg></span><span data-w="74" class="ms-1">SophieMcGee</span><span data-w="177"> via pages-build-deployment #${d[2]}</span></div></div>
<div class="branch d-flex align-items-center justify-content-center"><span data-w="26">main</span></div><div class="ago"><span data-w="${d[4]||22}">${d[3]}</span></div>${i?'':`<div style="padding:24px 0 0 13px">${use('ext')}</div>`}</div>`).join('');
// Tune letter spacing so each label fills its design width
document.querySelectorAll('[data-w]').forEach(e=>{const n=e.textContent.length;e.style.letterSpacing=((e.dataset.w-e.getBoundingClientRect().width)/n).toFixed(3)+'px'});
document.querySelectorAll('.tn').forEach(e=>e.style.letterSpacing='-.15px');
</script>
</body>
</html>
